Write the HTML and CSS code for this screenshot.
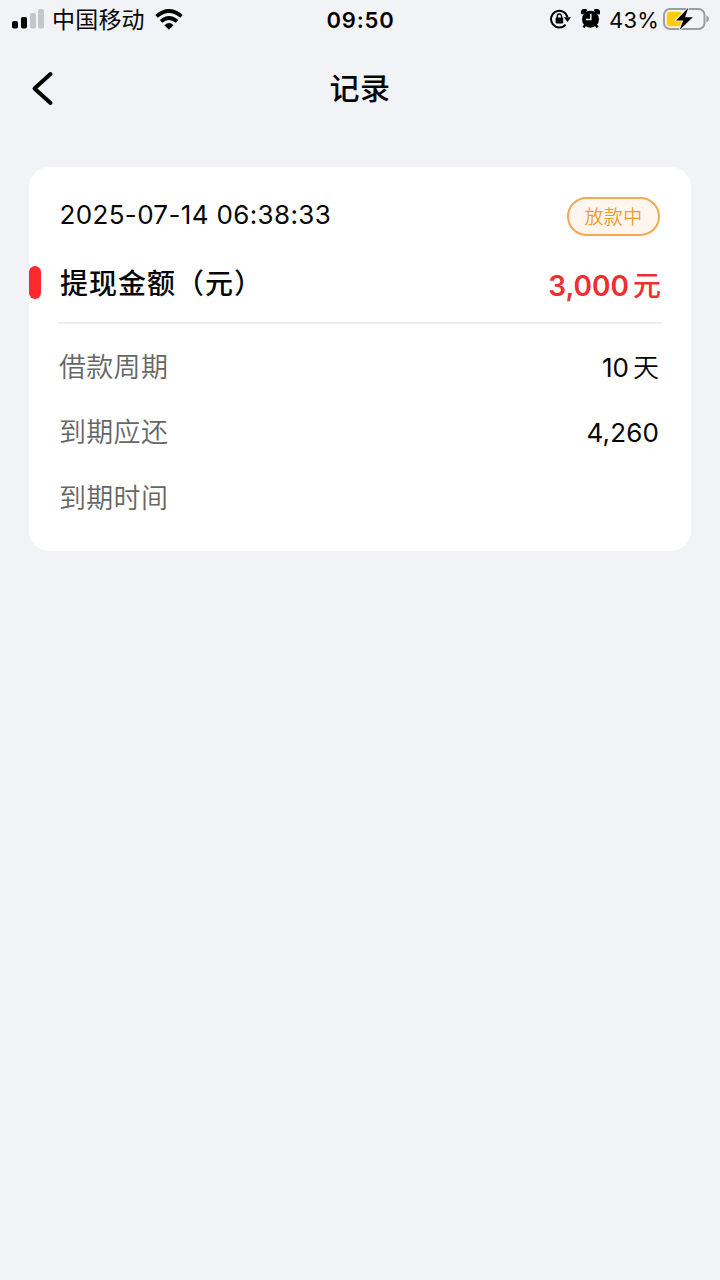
FILE: index.html
```html
<!DOCTYPE html>
<html lang="zh-CN">
<head>
<meta charset="utf-8">
<title>记录</title>
<link rel="stylesheet" href="styles.css">
</head>
<body>
<div class="status">
  <div class="status-left">
    <svg class="signal" width="32" height="20" viewBox="0 0 32 20"><rect x="0" y="12" width="6" height="7.5" rx="1.8"/><rect x="9" y="8" width="6" height="11.5" rx="1.8"/><rect class="dim" x="18" y="4" width="6" height="15.5" rx="1.8"/><rect class="dim" x="26" y="0" width="6" height="19.5" rx="1.8"/></svg>
    <span class="carrier">中国移动</span>
    <svg class="wifi" width="28" height="21" viewBox="0 0 28 21"><path class="arc" d="M1.5 7.4Q14-3.4 26.5 7.4M6 12.4Q14 5.6 22 12.4"/><path d="M9.4 16.2Q14 12 18.6 16.2L14 20.7Z"/></svg>
  </div>
  <div class="clock">09:50</div>
  <div class="status-right">
    <svg class="lock" width="21" height="20" viewBox="0 0 21 20"><path class="ring" d="M15.6 15.6A8.3 8.3 0 1 1 17.4 8.2"/><path d="M13.8 8.3H21L17.5 13Z"/><rect x="5.6" y="8.6" width="7.6" height="5.8" rx=".8"/><path class="shackle" d="M7.2 9V7.2a2.2 2.2 0 0 1 4.4 0V9"/></svg>
    <svg class="alarm" width="19" height="20" viewBox="0 0 19 20"><circle cx="9.5" cy="10.2" r="8.5"/><path d="M.5 5.4A3.6 3.6 0 0 1 6 .8L5 4.8ZM18.5 5.4A3.6 3.6 0 0 0 13 .8L14 4.8Z"/><path class="legs" d="M4.5 15.8L2.4 18.4M14.5 15.8L16.6 18.4"/><path class="hands" d="M9.8 4.8V10.4H5"/></svg>
    <span class="percent">43%</span>
    <svg class="battery" width="46" height="24" viewBox="0 0 46 24"><rect class="shell" x="1" y="2" width="40.5" height="20" rx="6"/><path class="cap" d="M43.4 8.5Q46 9.5 46 12T43.4 15.5Z"/><rect class="charge" x="3.8" y="4.8" width="15.5" height="14.4" rx="3.3"/><path class="bolt" d="M25.4 .8L13 13.4H20.2L16.6 23L29.8 10.2H22Z"/></svg>
  </div>
</div>
<header class="nav">
  <svg class="back" width="24" height="36" viewBox="0 0 24 36"><path d="M20.5 4L4.5 18.5L20.5 33"/></svg>
  <h1>记录</h1>
</header>
<main class="card">
  <div class="top-row"><span class="date">2025-07-14 06:38:33</span><span class="tag">放款中</span></div>
  <div class="amount-row"><span class="amount-label">提现金额（元）</span><span class="amount">3,000<span class="unit">元</span></span></div>
  <div class="detail"><span class="label">借款周期</span><span class="value">10<span class="unit">天</span></span></div>
  <div class="detail"><span class="label">到期应还</span><span class="value total">4,260</span></div>
  <div class="detail"><span class="label">到期时间</span></div>
</main>
</body>
</html>
```
FILE: styles.css
```css
* { box-sizing: border-box; }
body {
  margin: 0;
  min-height: 1280px;
  background: #f2f3f6;
  color: #050505;
  font-family: Inter, "Noto Sans CJK SC", sans-serif;
}
svg { display: block; flex: none; }
.status {
  display: grid;
  grid-template-columns: 1fr auto 1fr;
  align-items: center;
  height: 40px;
  padding: 0 11px 0 12px;
}
.status-left, .status-right { display: flex; align-items: center; height: 40px; }
.status-right { justify-content: flex-end; }
.status svg { margin-bottom: 2px; }
.signal .dim { fill: #c5c6c9; }
.carrier { margin: 0 10px 0 8px; font-size: 23px; letter-spacing: .2px; line-height: 40px; }
.arc { fill: none; stroke: #000; stroke-width: 3.8; }
.clock { font-size: 22px; font-weight: 600; letter-spacing: .8px; line-height: 40px; }
.ring { fill: none; stroke: #000; stroke-width: 2; }
.shackle { fill: none; stroke: #000; stroke-width: 1.4; }
.legs { stroke: #000; stroke-width: 2.5; }
.hands { fill: none; stroke: #f2f3f6; stroke-width: 1.5; }
.alarm { margin-left: 10px; }
.percent { margin: 0 5px 0 9px; font-size: 22px; letter-spacing: .2px; line-height: 40px; }
.status-right .lock, .status-right .alarm, .percent { position: relative; left: 1px; }
.shell { fill: none; stroke: #9c9da0; stroke-width: 2; }
.cap { fill: #9c9da0; }
.charge { fill: #ffcc0a; }
.bolt { stroke: #f2f3f6; stroke-width: 1.8; paint-order: stroke; }
.nav {
  display: grid;
  grid-template-columns: 1fr auto 1fr;
  align-items: center;
  height: 96px;
  padding: 0 30px;
}
.back path { fill: none; stroke: #000; stroke-width: 4; stroke-linecap: round; stroke-linejoin: round; }
h1 { margin: 0; font-size: 30px; font-weight: 500; line-height: 44px; letter-spacing: .5px; }
.card {
  width: 662px;
  height: 384px;
  margin: 31px 0 0 29px;
  padding: 30px 29px 0 29px;
  border-radius: 20px;
  background: #fff;
}
.top-row { display: flex; justify-content: space-between; padding: 0 2px 0 1.5px; height: 40px; }
.date { font-size: 26px; line-height: 35px; letter-spacing: .35px; }
.tag {
  width: 93px;
  height: 39px;
  border: 2px solid #f3a851;
  border-radius: 20px;
  background: #fff7ef;
  color: #f39a2c;
  font-size: 19px;
  font-weight: 350;
  line-height: 37px;
  text-align: center;
  letter-spacing: .4px;
}
.amount-row {
  display: flex;
  justify-content: space-between;
  align-items: flex-start;
  height: 87px;
  padding: 25px 1px 0 1px;
  margin-bottom: 11px;
  border-bottom: 2px solid #ebecee;
  font-weight: 600;
}
.amount-label { font-size: 28px; font-weight: 500; letter-spacing: 1px; line-height: 45px; }
.amount-label::before {
  content: "";
  float: left;
  width: 12px;
  height: 33px;
  margin: 4px 19px 0 -30px;
  border-radius: 6px;
  background: #ff292d;
}
.amount { color: #f12d30; font-size: 28px; line-height: 49px; }
.amount .unit { margin-left: 4px; font-weight: 500; }
.detail {
  display: flex;
  justify-content: space-between;
  height: 65.4px;
  padding: 0 3px 0 1px;
  font-size: 26px;
  line-height: 65px;
}
.label { color: #666; font-size: 27px; font-weight: 350; letter-spacing: .3px; }
.value .unit { margin-left: 4px; font-weight: 350; }
.total { letter-spacing: .15px; }
```
